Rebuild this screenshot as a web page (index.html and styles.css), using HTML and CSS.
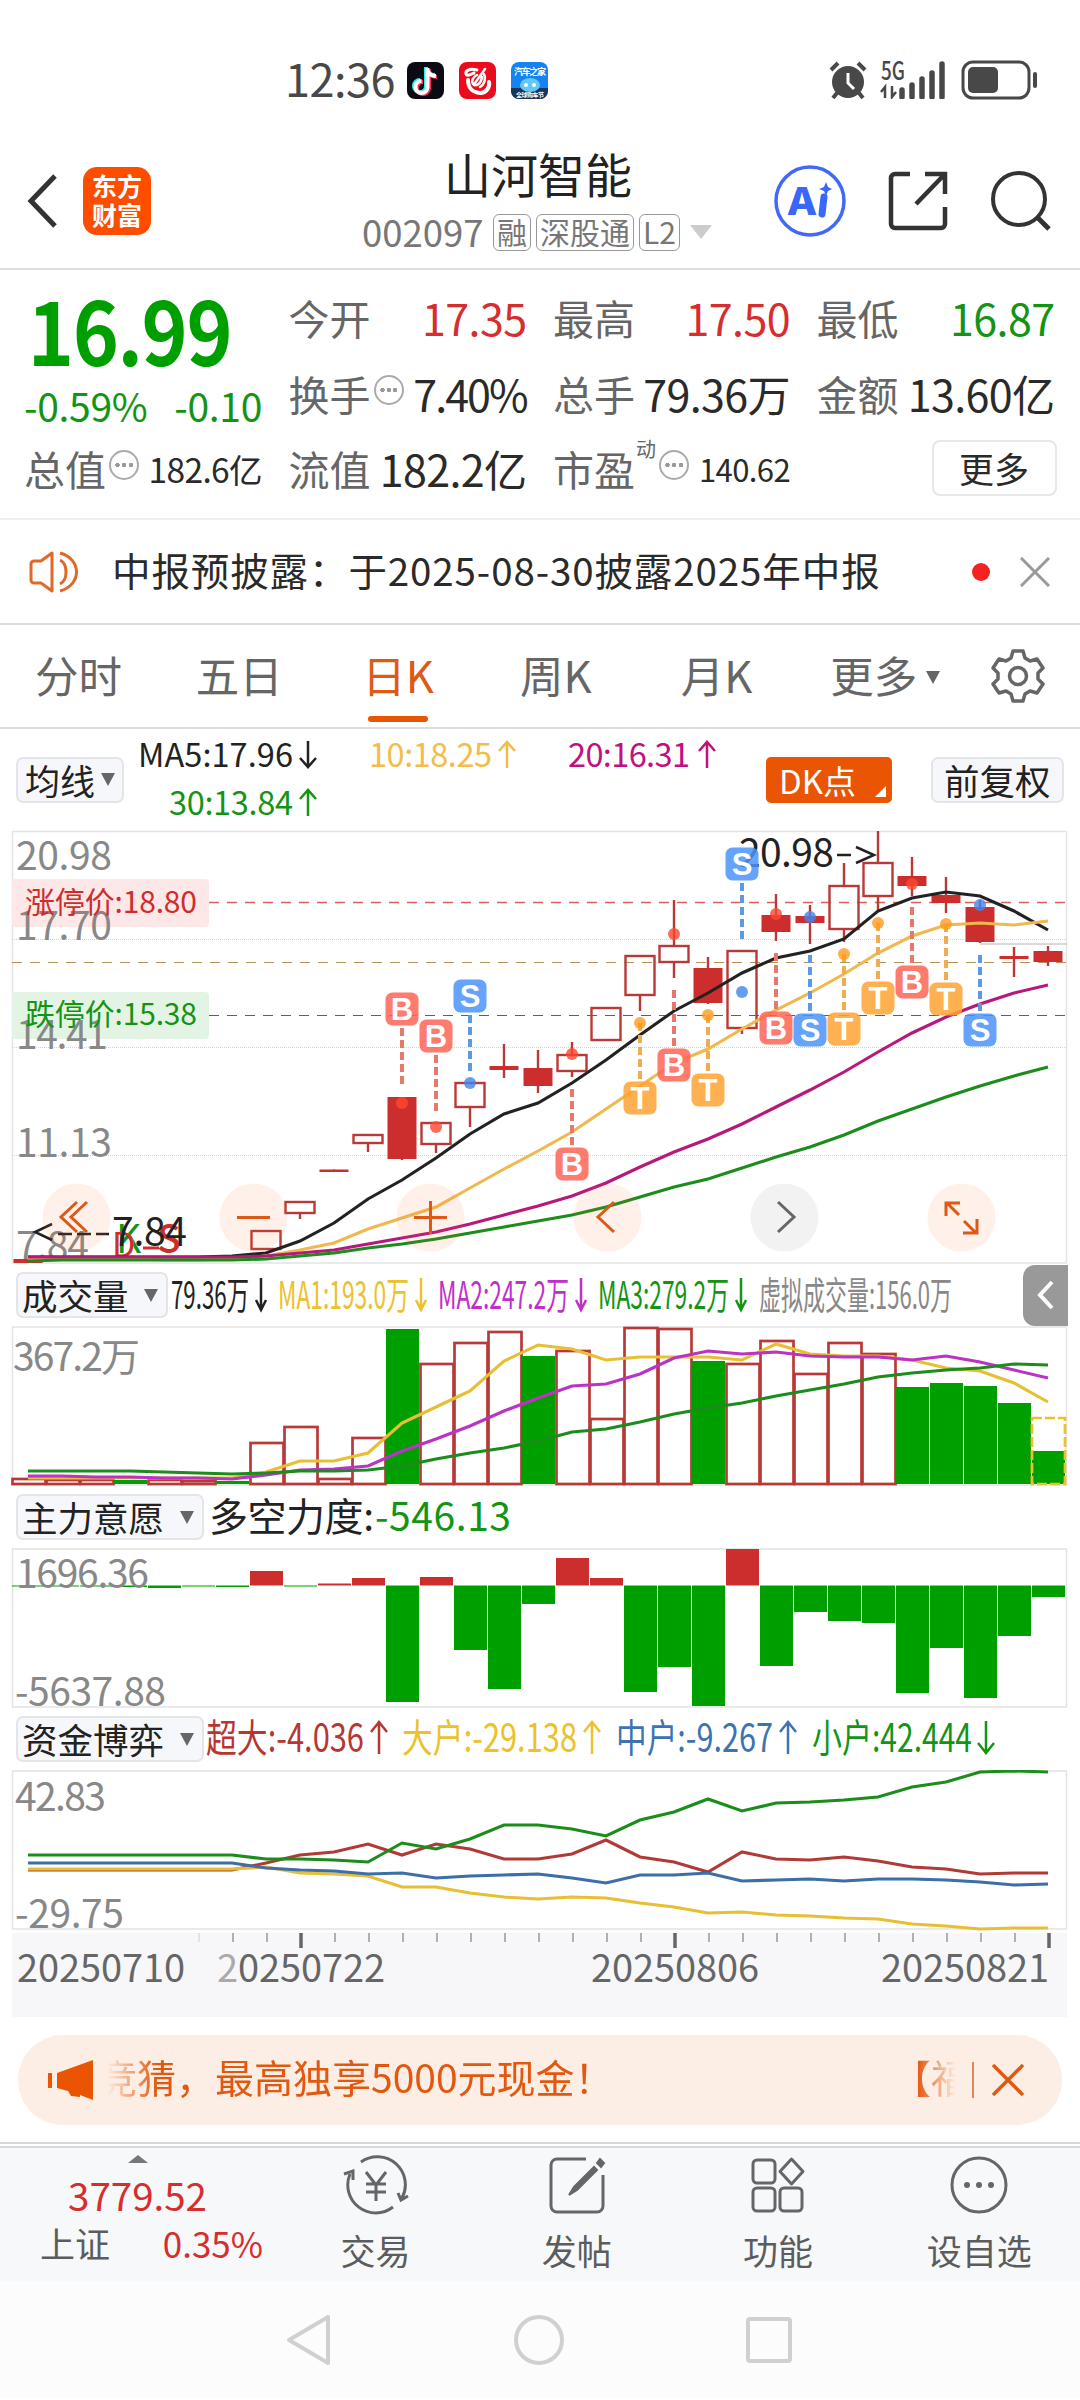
FILE: index.html
```html
<!DOCTYPE html>
<html lang="zh-CN">
<head>
    <meta charset="UTF-8">
    <meta name="viewport" content="width=device-width, initial-scale=1.0">
    <title>山河智能 002097</title>
    <link rel="stylesheet" href="styles.css">
</head>
<body>
    <!-- Status bar -->
    <div class="status-bar">
        <span class="clock">12:36</span>
        <div class="app-icons">
            <svg width="37" height="37" viewBox="0 0 37 37">
                <rect width="37" height="37" rx="8" fill="#0b0b14"/>
                <g fill="none" stroke-width="4">
                    <path d="M19 5v19a6 6 0 1 1-6-6M19 7c1 4 4 6 9 6" stroke="#25f4ee"/>
                    <path d="M22 7v19a6 6 0 1 1-6-6M22 9c1 4 4 6 8 6" stroke="#fe2c55"/>
                    <path d="M20.500 6v19a6 6 0 1 1-6-6M20.500 8c1 4 4 6 8.500 6" stroke="#fff"/>
                </g>
            </svg>
            <svg width="37" height="37" viewBox="0 0 37 37">
                <rect width="37" height="37" rx="8" fill="#ec0b1d"/>
                <g fill="none" stroke="#fff" stroke-linecap="round">
                    <path d="M18 8C10 6 6 9 7 12s5 0 8-1" stroke-width="3"/>
                    <path d="M9 18c0 9 6 13 13 13 6-1 9-6 8-11" stroke-width="4"/>
                    <path d="M26 7L16 21M18 13c-4 2-6 6-4 9 3 3 8 0 9-7M21 25c5-3 6-9 4-13" stroke-width="2.500"/>
                </g>
            </svg>
            <svg width="37" height="37" viewBox="0 0 37 37">
                <rect width="37" height="37" rx="8" fill="#1683f5"/>
                <path d="M0 26h37v3a8 8 0 0 1-8 8H8a8 8 0 0 1-8-8z" fill="#16365a"/>
                <ellipse cx="19" cy="23" rx="10" ry="7" fill="#63c7f8"/>
                <circle cx="15" cy="23" r="2" fill="#fff"/><circle cx="23" cy="23" r="2" fill="#fff"/>
                <text x="3" y="13" class="tiny" textLength="32">汽车之家</text>
                <text x="5" y="35" class="tiny-s" textLength="28">全球购车节</text>
            </svg>
        </div>
        <div class="status-right">
            <svg width="38" height="38" viewBox="0 0 38 38">
                <circle cx="19" cy="21" r="16" fill="#484848"/>
                <path d="M19 12v10l6 6" stroke="#fff" stroke-width="3" fill="none"/>
                <path d="M2 9l7-7M36 9l-7-7M8 32l-4 5M30 32l4 5" stroke="#484848" stroke-width="4"/>
            </svg>
            <svg class="signal" width="68" height="38" viewBox="0 0 68 38">
                <text x="1" y="19" textLength="24" lengthAdjust="spacingAndGlyphs">5G</text>
                <path d="M5 37V26l-4 5M12 25v11l4-5" stroke="#484848" stroke-width="2.5" fill="none"/>
                <path d="M22 36V29M32 36V24M42 36V18M52 36V12M62 36V3" stroke="#484848" stroke-width="5.500" stroke-linecap="round"/>
            </svg>
            <svg width="78" height="40" viewBox="0 0 78 40">
                <rect x="2" y="2" width="66" height="36" rx="10" fill="none" stroke="#484848" stroke-width="3"/>
                <rect x="7" y="7" width="30" height="26" rx="5" fill="#484848"/>
                <path d="M74 14v12" stroke="#484848" stroke-width="4" stroke-linecap="round"/>
            </svg>
        </div>
    </div>

    <!-- Header -->
    <header class="header">
        <svg class="back" width="32" height="56" viewBox="0 0 32 56"><path d="M29 3L5 28l24 25" fill="none" stroke="#333" stroke-width="5"/></svg>
        <div class="logo">东方<br>财富</div>
        <div class="title">
            <h1>山河智能</h1>
            <div class="code-row">
                <span class="code">002097</span>
                <span class="tag">融</span>
                <span class="tag">深股通</span>
                <span class="tag">L2</span>
                <i class="caret"></i>
            </div>
        </div>
        <div class="header-actions">
            <svg width="72" height="72" viewBox="0 0 72 72">
                <circle cx="36" cy="36" r="34" fill="none" stroke="#4169f5" stroke-width="3.5"/>
                <text x="14" y="50" class="ai" textLength="28" lengthAdjust="spacingAndGlyphs">A</text>
                <path d="M50 32l-2 17" stroke="#3a66fa" stroke-width="7" stroke-linecap="round"/>
                <path d="M52 17l2 5 4 2-4 2-2 5-2-5-5-2 5-2z" fill="#3a66fa"/>
            </svg>
            <svg width="60" height="60" viewBox="0 0 60 60">
                <path d="M22 3H7a4 4 0 0 0-4 4v46a4 4 0 0 0 4 4h46a4 4 0 0 0 4-4V36M37 3h20v20M56 4L28 33" fill="none" stroke="#333" stroke-width="4.5"/>
            </svg>
            <svg width="62" height="62" viewBox="0 0 62 62">
                <circle cx="29" cy="29" r="26" fill="none" stroke="#333" stroke-width="4"/>
                <path d="M47 47l12 12" stroke="#333" stroke-width="5"/>
            </svg>
        </div>
    </header>

    <!-- Quote -->
    <section class="quote">
        <div class="price">16.99</div>
        <div class="cell"><label>今开</label><b class="up">17.35</b></div>
        <div class="cell"><label>最高</label><b class="up">17.50</b></div>
        <div class="cell"><label>最低</label><b class="down">16.87</b></div>

        <div class="change"><span>-0.59%</span><span>-0.10</span></div>
        <div class="cell"><label>换手</label><i class="dots"></i><b class="rate">7.40%</b></div>
        <div class="cell"><label>总手</label><b>79.36万</b></div>
        <div class="cell"><label>金额</label><b>13.60亿</b></div>

        <div class="cell first"><label>总值</label><i class="dots"></i><b class="small">182.6亿</b></div>
        <div class="cell"><label>流值</label><b>182.2亿</b></div>
        <div class="cell"><label>市盈</label><sup>动</sup><i class="dots"></i><b class="small pe">140.62</b></div>
        <div class="cell end"><button class="more-btn">更多</button></div>
    </section>

    <!-- Notice -->
    <section class="notice">
        <svg width="52" height="44" viewBox="0 0 52 44">
            <path d="M23 3L12 11H5a3 3 0 0 0-3 3v16a3 3 0 0 0 3 3h7l11 8z" fill="none" stroke="#e0682a" stroke-width="3" stroke-linejoin="round"/>
            <path d="M31 10c8 4 8 20 0 24M31 3c22 6 22 32 0 38" fill="none" stroke="#e0682a" stroke-width="3"/>
        </svg>
        <p>中报预披露：于2025-08-30披露2025年中报</p>
        <i class="red-dot"></i>
        <svg width="30" height="30" viewBox="0 0 30 30"><path d="M1 1l28 28M29 1L1 29" stroke="#999" stroke-width="3"/></svg>
    </section>

    <!-- Period tabs -->
    <nav class="tabs">
        <span>分时</span>
        <span>五日</span>
        <span class="active">日K</span>
        <span>周K</span>
        <span>月K</span>
        <span class="more">更多<i class="caret"></i></span>
        <svg width="54" height="54" viewBox="0 0 54 54">
            <path d="M22 2h10l2 7 5 3 7-2 6 9-5 5v6l5 5-6 9-7-2-5 3-2 7H22l-2-7-5-3-7 2-6-9 5-5v-6l-5-5 6-9 7 2 5-3z" fill="none" stroke="#666" stroke-width="3.5" stroke-linejoin="round"/>
            <circle cx="27" cy="27" r="8.5" fill="none" stroke="#666" stroke-width="3.5"/>
        </svg>
    </nav>

    <!-- Moving averages -->
    <section class="ma-row">
        <button class="chip">均线<i class="caret"></i></button>
        <svg class="legend" width="600" height="100" viewBox="130 730 600 100">
            <g class="ma">
                <text x="138" y="767" fill="#222" textLength="155">MA5:17.96</text>
                <text x="369" y="767" fill="#f3bd47" textLength="123">10:18.25</text>
                <text x="568" y="767" fill="#c0117f" textLength="122">20:16.31</text>
                <text x="169" y="815" fill="#149414" textLength="124">30:13.84</text>
            </g>
            <g fill="none" stroke-width="2.5">
                <path d="M308 741v26m-8-9l8 9 8-9" stroke="#222"/>
                <path d="M507 768v-26m-8 9l8-9 8 9" stroke="#f3bd47"/>
                <path d="M707 768v-26m-8 9l8-9 8 9" stroke="#c0117f"/>
                <path d="M308 816v-26m-8 9l8-9 8 9" stroke="#149414"/>
            </g>
        </svg>
        <button class="chip dk">DK点</button>
        <button class="chip adjust">前复权</button>
    </section>

    <!-- K line -->
    <svg class="chart" id="kline" width="1080" height="434" viewBox="0 830 1080 434">
        <path class="frame" d="M12.5 831.5h1054v431.5h-1054z"/>
        <path class="grid" d="M12 939.5h1055M12 1047.5h1055M12 1155.5h1055"/>
        <path d="M209 902.5h858" stroke="#d9605c" stroke-width="1.5" stroke-dasharray="10 8"/>
        <path d="M12 962.5h1055" stroke="#b79254" stroke-dasharray="10 8"/>
        <path d="M209 1015.5h858" stroke="#149414" stroke-dasharray="10 8"/>
        <path d="M980 944h87" stroke="#ccc" stroke-width="1.5"/>
        <text class="peak" x="739" y="867" textLength="95">20.98</text>
        <path d="M837 855h14M856 847l18 8-18 8" fill="none" stroke="#222" stroke-width="2.5"/>
        <rect x="12" y="879" width="197" height="48" rx="4" fill="#fee7e7"/>
        <rect x="12" y="992" width="197" height="47" rx="4" fill="#e4f4e4"/>
        <g class="axis">
            <text x="16" y="870" textLength="96">20.98</text>
            <text x="16" y="940" textLength="96">17.70</text>
            <text x="16" y="1049" textLength="92">14.41</text>
            <text x="16" y="1157" textLength="96">11.13</text>
            <text x="16" y="1260" textLength="73">7.84</text>
        </g>
        <text class="limit" x="25" y="913" fill="#cc2e2e" textLength="172">涨停价:18.80</text>
        <text class="limit" x="25" y="1025" fill="#149414" textLength="172">跌停价:15.38</text>
        <g class="dk-mark">
            <text x="116" y="1253" fill="#149414">K</text>
            <text x="112" y="1257" fill="#cc2e2e" class="d">D</text>
            <text x="157" y="1253" fill="#cc2e2e" class="s">S</text>
            <path d="M143 1248h16" stroke="#cc2e2e" stroke-width="3"/>
        </g>
        <text class="peak" x="112" y="1246" textLength="75">7.84</text>
        <path d="M52 1224l-17 8 17 8M58 1234h14M77 1234h14M96 1234h13" fill="none" stroke="#222" stroke-width="2.5"/>
        <g id="candles"></g>
        <g id="maLines"></g>
        <g id="signals"></g>
        <g class="controls">
            <g id="discs"></g>
            <g fill="none" stroke="#dc5a16" stroke-width="3">
                <path d="M77 1202l-16 15 16 15M87 1202l-16 15 16 15"/>
                <path d="M237 1217.500h33M414 1217.500h33M430.500 1201v33"/>
                <path d="M614 1202l-16 15 16 15"/>
                <path d="M778 1202l16 15-16 15" stroke="#666"/>
                <path d="M946 1216v-13h14M947 1203l12 12M977 1219v14h-14M976 1233l-12-12"/>
            </g>
        </g>
    </svg>

    <!-- Volume -->
    <div class="sub-head">
        <button class="chip">成交量<i class="caret"></i></button>
        <svg class="legend" width="790" height="62" viewBox="171 1264 790 62">
            <g class="vol">
                <text x="172" y="1309" fill="#222" textLength="78" lengthAdjust="spacingAndGlyphs">79.36万</text>
                <text x="279" y="1309" fill="#ebc12c" textLength="131" lengthAdjust="spacingAndGlyphs">MA1:193.0万</text>
                <text x="439" y="1309" fill="#c030c8" textLength="131" lengthAdjust="spacingAndGlyphs">MA2:247.2万</text>
                <text x="599" y="1309" fill="#149414" textLength="131" lengthAdjust="spacingAndGlyphs">MA3:279.2万</text>
                <text x="760" y="1309" fill="#888" textLength="193" lengthAdjust="spacingAndGlyphs">虚拟成交量:156.0万</text>
            </g>
            <g fill="none" stroke-width="2.500">
                <path d="M262 1278v32m-5-10l5 10 5-10" stroke="#222"/>
                <path d="M422 1278v32m-5-10l5 10 5-10" stroke="#ebc12c"/>
                <path d="M582 1278v32m-5-10l5 10 5-10" stroke="#c030c8"/>
                <path d="M742 1278v32m-5-10l5 10 5-10" stroke="#149414"/>
            </g>
        </svg>
        <span class="drawer"><svg width="18" height="30" viewBox="0 0 18 30"><path d="M15 2L3 15l12 13" fill="none" stroke="#fff" stroke-width="4"/></svg></span>
    </div>
    <svg class="chart" width="1080" height="160" viewBox="0 1326 1080 160">
        <path class="frame" d="M12.500 1327h1054v158h-1054z"/>
        <g class="axis"><text x="13" y="1371" textLength="127">367.2万</text></g>
        <g id="volBars"></g>
        <g id="volLines"></g>
    </svg>

    <!-- Main force -->
    <div class="sub-head">
        <button class="chip">主力意愿<i class="caret"></i></button>
        <svg class="legend" width="320" height="62" viewBox="206 1486 320 62">
            <g class="wide">
                <text x="209" y="1531" fill="#222" textLength="165">多空力度:</text>
                <text x="375" y="1531" fill="#149414" textLength="136">-546.13</text>
            </g>
        </svg>
    </div>
    <svg class="chart" width="1080" height="160" viewBox="0 1548 1080 160">
        <path class="frame" d="M12.500 1549h1054v158h-1054z"/>
        <g id="forceBars"></g>
        <g class="axis">
            <text x="16" y="1588" textLength="133">1696.36</text>
            <text x="15" y="1706" textLength="151">-5637.88</text>
        </g>
    </svg>

    <!-- Capital -->
    <div class="sub-head">
        <button class="chip">资金博弈<i class="caret"></i></button>
        <svg class="legend" width="800" height="62" viewBox="206 1708 800 62">
            <g class="wide">
                <text x="206" y="1752" fill="#b83632" textLength="158" lengthAdjust="spacingAndGlyphs">超大:-4.036</text>
                <text x="402" y="1752" fill="#ebc12c" textLength="175" lengthAdjust="spacingAndGlyphs">大户:-29.138</text>
                <text x="616" y="1752" fill="#3c73b0" textLength="157" lengthAdjust="spacingAndGlyphs">中户:-9.267</text>
                <text x="812" y="1752" fill="#149414" textLength="160" lengthAdjust="spacingAndGlyphs">小户:42.444</text>
            </g>
            <g fill="none" stroke-width="2.500">
                <path d="M379 1754v-32m-8 10l8-10 8 10" stroke="#b83632"/>
                <path d="M592 1754v-32m-8 10l8-10 8 10" stroke="#ebc12c"/>
                <path d="M788 1754v-32m-8 10l8-10 8 10" stroke="#3c73b0"/>
                <path d="M986 1721v32m-8-10l8 10 8-10" stroke="#149414"/>
            </g>
        </svg>
    </div>
    <svg class="chart" width="1080" height="163" viewBox="0 1770 1080 163">
        <path class="frame" d="M12.500 1771h1054v158h-1054z"/>
        <g class="axis">
            <text x="15" y="1811" textLength="91">42.83</text>
            <text x="15" y="1928" textLength="109">-29.75</text>
        </g>
        <g id="fundLines"></g>
    </svg>
    <svg class="chart" width="1080" height="84" viewBox="0 1933 1080 84">
        <rect x="12" y="1933" width="1055" height="84" fill="#f7f7fa"/>
        <g id="ticks"></g>
        <g class="dates">
            <text x="17" y="1982" textLength="168">20250710</text>
            <text x="217" y="1982" textLength="168"><tspan fill="#aaa">2</tspan>0250722</text>
            <text x="591" y="1982" textLength="168">20250806</text>
            <text x="881" y="1982" textLength="168">20250821</text>
        </g>
    </svg>

    <!-- Promo -->
    <div class="promo">
        <svg width="46" height="40" viewBox="0 0 46 40">
            <path d="M2 13v15" stroke="#ea5504" stroke-width="4"/>
            <path d="M9 13L45 0v40l-13-5v2l-9-1-3-5-11-3z" fill="#ea5504"/>
        </svg>
        <div class="marquee"><span>竞猜，最高独享5000元现金！</span><span>【福利】</span></div>
        <i class="divider"></i>
        <svg width="34" height="34" viewBox="0 0 34 34"><path d="M2 2l30 30M32 2L2 32" stroke="#e2580f" stroke-width="3.500"/></svg>
    </div>

    <!-- Bottom bar -->
    <footer class="bottom-bar">
        <div class="index">
            <i class="caret"></i>
            <strong>3779.52</strong>
            <div><span>上证</span><em>0.35%</em></div>
        </div>
        <div class="item">
            <svg width="66" height="60" viewBox="0 0 66 60">
                <g fill="none" stroke="#666" stroke-width="3">
                    <path d="M18 7A28 28 0 0 1 59 43M50 52A28 28 0 0 1 7 19M1 19l9-3v9M65 41l-7 4-3-7"/>
                    <path d="M23 17l10 13 10-13M33 29v17M23 29h20M23 37h20"/>
                </g>
            </svg>
            <span>交易</span>
        </div>
        <div class="item">
            <svg width="58" height="60" viewBox="0 0 58 60">
                <path d="M38 4H9a6 6 0 0 0-6 6v41a6 6 0 0 0 6 6h40a6 6 0 0 0 6-6V20" fill="none" stroke="#666" stroke-width="3"/>
                <path d="M46 12L26 32l-5 8 8-5 20-20zM49 8l3-4 4 4-3 4z" fill="#666" stroke="#666" stroke-width="2"/>
            </svg>
            <span>发帖</span>
        </div>
        <div class="item">
            <svg width="58" height="60" viewBox="0 0 58 60">
                <g fill="none" stroke="#666" stroke-width="3">
                    <rect x="4" y="5" width="22" height="23" rx="4"/>
                    <rect x="4" y="33" width="22" height="23" rx="4"/>
                    <rect x="31" y="33" width="22" height="23" rx="4"/>
                    <path d="M42.500 4L54 16.500 42.500 29 31 16.500z" stroke-linejoin="round"/>
                </g>
            </svg>
            <span>功能</span>
        </div>
        <div class="item">
            <svg width="60" height="60" viewBox="0 0 60 60">
                <circle cx="30" cy="30" r="27" fill="none" stroke="#666" stroke-width="3"/>
                <g fill="#666"><circle cx="18" cy="30" r="3"/><circle cx="30" cy="30" r="3"/><circle cx="42" cy="30" r="3"/></g>
            </svg>
            <span>设自选</span>
        </div>
    </footer>

    <div class="sys-nav">
        <svg width="46" height="54" viewBox="0 0 46 54"><path d="M43 4v46L4 27z" fill="none" stroke="#d0d0d0" stroke-width="4" stroke-linejoin="round"/></svg>
        <svg width="50" height="50" viewBox="0 0 50 50"><circle cx="25" cy="25" r="23" fill="none" stroke="#d0d0d0" stroke-width="4"/></svg>
        <svg width="46" height="46" viewBox="0 0 46 46"><rect x="2" y="2" width="42" height="42" rx="2" fill="none" stroke="#d0d0d0" stroke-width="4"/></svg>
    </div>

    <script src="chart.js"></script>
</body>
</html>
```
FILE: styles.css
```css
* {
    margin: 0;
    padding: 0;
    box-sizing: border-box;
}

:root {
    --red: #d62e2e;
    --green: #009f00;
    --orange: #ea5504;
    --gray: #666;
}

body {
    width: 1080px;
    height: 2400px;
    overflow: hidden;
    background: #fff;
    color: #2a2a2a;
    font-family: "Noto Sans CJK SC", sans-serif;
}

svg {
    display: block;
    flex: none;
}

i, em {
    font-style: normal;
}

button {
    font-family: inherit;
    color: inherit;
}

.caret {
    display: inline-block;
    border: 7px solid transparent;
    border-top: 13px solid var(--gray);
    border-bottom: 0;
}

/* status bar */
.status-bar {
    height: 134px;
    padding: 26px 41px 0 285px;
    display: flex;
    align-items: center;
    color: #484848;
}

.clock {
    width: 122px;
    font-size: 45px;
    line-height: 60px;
    margin-top: -5px;
    letter-spacing: -0.5px;
}

.app-icons {
    display: flex;
    gap: 15px;
}

.tiny, .tiny-s {
    font-size: 9px;
    font-weight: 700;
    fill: #fff;
}

.tiny-s {
    font-size: 6px;
}

.status-right {
    margin-left: auto;
    display: flex;
    align-items: center;
    gap: 13px;
}

.signal text {
    font-size: 25px;
    font-weight: 500;
    fill: #484848;
}

/* header */
.header {
    height: 136px;
    padding: 0 28px 0 26px;
    display: flex;
    align-items: center;
    border-bottom: 2px solid #ddd;
}

.logo {
    width: 68px;
    height: 68px;
    margin-left: 25px;
    padding-top: 4px;
    border-radius: 14px;
    background: #ff4d00;
    color: #fff;
    font-size: 25px;
    font-weight: 700;
    line-height: 29px;
    text-align: center;
}

.title {
    width: 380px;
    margin-left: 200px;
    padding-left: 11px;
}

.title h1 {
    font-size: 47px;
    font-weight: 400;
    line-height: 58px;
    margin-top: -5px;
    padding-left: 82px;
    color: #222;
}

.code-row {
    display: flex;
    align-items: center;
    height: 42px;
    margin-top: 9px;
    color: #777;
}

.code {
    font-size: 36.500px;
    width: 131px;
    line-height: 40px;
}

.tag {
    height: 37px;
    margin-right: 5px;
    padding: 0 3px;
    border: 1.500px solid #999;
    border-radius: 6px;
    font-size: 30px;
    line-height: 32px;
}

.code-row .caret {
    margin-left: 5px;
    border-width: 14px 11px 0;
    border-top-color: #ccc;
}

.header-actions {
    margin-left: auto;
    display: flex;
    align-items: center;
    gap: 42px;
}

.ai {
    font-size: 38px;
    font-weight: 900;
    fill: #3a66fa;
}

/* quote */
.quote {
    height: 250px;
    padding: 9px 25px 0 26px;
    display: grid;
    grid-template-columns: 236px 238px 237px 238px;
    grid-template-rows: 76px 76px 74px;
    column-gap: 26.500px;
    border-bottom: 2px solid #eee;
}

.price {
    color: var(--green);
    font-size: 87px;
    font-weight: 700;
    line-height: 98px;
    letter-spacing: -1.500px;
    padding-left: 2px;
    transform: scaleX(0.9);
    transform-origin: left;
}

.change {
    display: flex;
    justify-content: space-between;
    align-items: center;
    margin-left: -2px;
    padding-top: 24px;
    color: #149414;
    font-size: 39px;
    letter-spacing: -0.3px;
    white-space: nowrap;
}

.cell {
    display: flex;
    align-items: center;
    white-space: nowrap;
}

.cell.first {
    margin-left: -2px;
}

.cell label {
    font-size: 41px;
    color: var(--gray);
}

.cell b {
    margin-left: auto;
    font-size: 43px;
    font-weight: 400;
    letter-spacing: -0.6px;
}

.cell b.rate {
    letter-spacing: -2px;
}

.cell b.small {
    font-size: 33.500px;
}

.cell b.pe {
    font-size: 31px;
}

.cell sup {
    font-size: 20px;
    line-height: 20px;
    margin-top: -38px;
    margin-left: 1px;
    color: var(--gray);
}

.dots {
    width: 30px;
    height: 30px;
    margin: -6px 0 0 3px;
    border: 2.500px solid #aaa;
    border-radius: 50%;
    background:
        radial-gradient(circle, #999 2px, transparent 2.500px) -6.500px 0,
        radial-gradient(circle, #999 2px, transparent 2.500px) 0 0,
        radial-gradient(circle, #999 2px, transparent 2.500px) 6.500px 0;
    background-repeat: no-repeat;
}

.up { color: var(--red); }
.down { color: #149414; }

.cell.end {
    justify-content: flex-end;
}

.more-btn {
    width: 125px;
    height: 56px;
    margin-right: -2px;
    background: #fff;
    border: 2px solid #e6e8ea;
    border-radius: 8px;
    font-size: 35px;
    line-height: 46px;
}

/* notice */
.notice {
    height: 105px;
    padding: 0 30px 0 29px;
    display: flex;
    align-items: center;
    border-bottom: 2px solid #ddd;
}

.notice p {
    width: 859px;
    padding-left: 31px;
    margin-top: -5px;
    font-size: 38.500px;
    letter-spacing: 0.9px;
    white-space: nowrap;
}

.red-dot {
    width: 18px;
    height: 18px;
    margin: 0 auto 0 32px;
    border-radius: 50%;
    background: #f52222;
}

/* tabs */
.tabs {
    height: 104px;
    padding: 0 35px;
    display: flex;
    align-items: center;
    border-bottom: 2px solid #ddd;
    color: var(--gray);
    font-size: 43.500px;
}

.tabs span {
    position: relative;
    width: 161px;
    line-height: 100px;
    margin-top: -3px;
}

.tabs span:nth-child(2) {
    width: 167px;
}

.tabs .active {
    width: 158px;
    color: #dc5a16;
}

.tabs .active::after {
    content: "";
    position: absolute;
    left: 6px;
    bottom: 3px;
    width: 60px;
    height: 6px;
    border-radius: 3px;
    background: var(--orange);
}

.tabs span:nth-child(5) {
    width: 150px;
}

.tabs .caret {
    margin: 0 0 9px 9px;
}

/* chips */
.chip {
    height: 46px;
    padding: 0 6px 0 4px;
    display: flex;
    align-items: center;
    justify-content: space-between;
    border: 2px solid #e3e5e8;
    border-radius: 7px;
    background: #f6f7fa;
    font-size: 35.500px;
    line-height: 38px;
    white-space: nowrap;
    color: #222;
}

.ma-row {
    height: 101px;
    padding: 0 16px;
    display: flex;
    align-items: center;
}

.ma-row .chip {
    width: 108px;
    padding: 0 7px;
    font-size: 35px;
}

.ma-row .legend {
    margin-left: 6px;
}

.ma-row .dk {
    position: relative;
    width: 126px;
    margin-left: 36px;
    padding-left: 11px;
    border-color: var(--orange);
    border-radius: 5px;
    background: var(--orange);
    color: #fff;
    font-size: 33px;
    line-height: 34px;
}

.dk::after {
    content: "";
    position: absolute;
    right: 4px;
    bottom: 4px;
    border-left: 11px solid transparent;
    border-bottom: 11px solid #fff;
}

.ma-row .adjust {
    width: 133px;
    margin-left: auto;
    padding: 0 11px;
    font-size: 35.500px;
}

.ma text { font-size: 32.500px; }
.vol text { font-size: 38px; }
.wide text { font-size: 39px; }

.sub-head {
    height: 62px;
    padding-left: 16px;
    display: flex;
    align-items: center;
}

.sub-head .chip {
    width: 152px;
}

.sub-head .caret {
    margin-right: 2px;
}

.sub-head .chip:has(+ .legend .wide) {
    width: 188px;
}

.sub-head .legend {
    margin-left: 2px;
}

.drawer {
    width: 45px;
    height: 61px;
    margin-left: auto;
    margin-right: 12px;
    padding: 15px 0 0 14px;
    border-radius: 12px 0 0 12px;
    background: #999;
}

/* charts */
.frame {
    fill: none;
    stroke: #e4e4e4;
    stroke-width: 1.500;
}

.grid {
    stroke: #d4d4d4;
    stroke-dasharray: 1 1;
}

.axis text {
    font-size: 39px;
    fill: #888;
}

.limit { font-size: 30px; }

.peak {
    font-size: 39px;
    fill: #222;
}

.dk-mark text {
    font-size: 39px;
}

.dk-mark .d {
    font-size: 34px;
}

.dk-mark .s {
    font-weight: 500;
}

.dates text {
    font-size: 38px;
    fill: var(--gray);
}

.sig-letter {
    font-size: 31px;
    font-weight: 700;
    fill: #fff;
    text-anchor: middle;
    font-family: "Liberation Sans", Arial, sans-serif;
}

/* promo */
.promo {
    height: 90px;
    margin: 18px 18px 0;
    padding: 0 37px 0 30px;
    display: flex;
    align-items: center;
    border-radius: 45px;
    background: #fceee4;
    color: #e2580f;
    font-size: 39px;
}

.marquee {
    width: 850px;
    height: 60px;
    margin-left: 13px;
    display: flex;
    justify-content: space-between;
    overflow: hidden;
    line-height: 53px;
    white-space: nowrap;
    -webkit-mask-image: linear-gradient(90deg, transparent, #000 50px, #000 810px, transparent);
    mask-image: linear-gradient(90deg, transparent, #000 50px, #000 810px, transparent);
}

.marquee span:first-child {
    margin-left: -9px;
}

.marquee span:last-child {
    width: 64px;
}

.divider {
    width: 2px;
    height: 36px;
    margin: 0 17px 0 16px;
    background: #dc8a5e;
}

/* bottom bar */
.bottom-bar {
    height: 139px;
    margin-top: 17px;
    border-top: 2px solid #d8d8d8;
    display: flex;
    background: linear-gradient(#fff 2px, #d8d8d8 2px, #d8d8d8 4px, #f7f8fa 4px);
    color: #5c5c5c;
    font-size: 35px;
}

.index {
    width: 275px;
    padding-top: 11px;
    display: flex;
    flex-direction: column;
    align-items: center;
    color: var(--red);
}

.index .caret {
    border-width: 0 10px 8px;
    border-bottom: 8px solid #777;
}

.index strong {
    margin-top: 6px;
    font-size: 38.500px;
    font-weight: 400;
    line-height: 50px;
}

.index div {
    width: 223px;
    margin-left: 28px;
    display: flex;
    justify-content: space-between;
    line-height: 48px;
}

.index span {
    color: #5c5c5c;
}

.item {
    flex: 1;
    padding-top: 11px;
    display: flex;
    flex-direction: column;
    align-items: center;
}

.item span {
    margin-top: 10px;
    line-height: 50px;
}

.sys-nav {
    height: 117px;
    padding: 0 288px 0 285px;
    display: flex;
    align-items: center;
    justify-content: space-between;
    background: #fcfcfc;
}
```
FILE: chart.js
```js
const RED = '#cc2e2e', DARK_RED = '#b83a38', GREEN = '#009f00';
const cx = i => 28 + i * 34;

function draw(id, html) {
    document.getElementById(id).innerHTML = html;
}

function line(values, color, width) {
    const pts = values.map((y, i) => cx(i) + ',' + y).join(' ');
    return `<polyline points="${pts}" fill="none" stroke="${color}" stroke-width="${width || 3.1}"/>`;
}

// [column, body top, body bottom, high, low, filled]
const candles = [
    [0, 1259, 1263, 1259, 1263, 1],
    [7, 1231, 1249, 1231, 1249, 0], [8, 1202, 1213, 1202, 1219, 0], [9, 1169.5, 1172, 1170, 1172, 1],
    [10, 1135, 1143, 1135, 1152, 0], [11, 1097, 1159, 1097, 1160, 1], [12, 1123, 1144, 1123, 1153, 0],
    [13, 1083, 1107, 1083, 1127, 0], [14, 1066, 1070, 1044, 1078, 1], [15, 1068, 1086, 1050, 1093, 1],
    [16, 1055, 1071, 1042, 1077, 0], [17, 1008, 1040, 1008, 1040, 0], [18, 956, 995, 956, 1011, 0],
    [19, 946, 962, 900, 978, 0], [20, 968, 1003, 957, 1004, 1], [21, 951, 1028, 951, 1034, 0],
    [22, 915, 932, 894, 941, 1], [23, 916, 923, 905, 944, 1], [24, 886, 929, 863, 942, 0],
    [25, 863, 896, 831, 910, 0], [26, 876, 886, 857, 896, 1], [27, 895, 903, 877, 913, 1],
    [28, 907, 942, 900, 943, 1], [29, 956, 959, 947, 977, 1], [30, 951, 962, 946, 966, 1]
];

draw('candles', candles.map(([i, top, bottom, high, low, filled]) => {
    const x = cx(i);
    const wick = `<path d="M${x} ${high}V${top}M${x} ${bottom}V${low}" stroke="${DARK_RED}" stroke-width="2.4"/>`;
    const body = filled
        ? `<rect x="${x - 14.5}" y="${top}" width="29" height="${bottom - top}" fill="${RED}"/>`
        : `<rect x="${x - 14.5}" y="${top}" width="29" height="${bottom - top}" fill="none" stroke="${DARK_RED}" stroke-width="2.4"/>`;
    return wick + body;
}).join(''));

draw('maLines',
    line([1257, 1257, 1257, 1257, 1257, 1257, 1256, 1253, 1241, 1223, 1199, 1180, 1158, 1134, 1114, 1103, 1083, 1060, 1035, 1011, 993, 973, 958, 951, 939, 911, 898, 892, 896, 911, 930], '#222') +
    line([1259, 1259, 1259, 1259, 1260, 1260, 1259, 1256, 1250, 1243, 1229, 1218, 1207, 1188, 1169, 1151, 1132, 1109, 1086, 1063, 1049, 1029, 1010, 993, 974, 953, 936, 925, 923, 925, 921], '#f0b84e') +
    line([1257, 1257, 1257, 1257, 1257, 1257, 1257, 1256, 1253, 1250, 1244, 1238, 1232, 1224, 1215, 1206, 1196, 1183, 1167, 1152, 1139, 1124, 1107, 1090, 1072, 1052, 1033, 1017, 1004, 993, 985], '#b8177c') +
    line([1261, 1260, 1260, 1260, 1260, 1260, 1260, 1259, 1256, 1253, 1248, 1244, 1239, 1233, 1227, 1221, 1215, 1207, 1197, 1187, 1179, 1168, 1157, 1147, 1135, 1121, 1109, 1097, 1086, 1076, 1067], '#1c8c1c'));

// [column, letter, badge y, dot y, line start, line end]
const signals = [
    [11, 'B', 1009, 1103, 1028, 1084], [12, 'B', 1036, 1127, 1055, 1111], [13, 'S', 996, 1083, 1015, 1071],
    [16, 'B', 1164, 1054, 1089, 1145], [18, 'T', 1098, 1023, 1023, 1079], [19, 'B', 1065, 934, 990, 1047],
    [20, 'T', 1090, 1015, 1015, 1071], [21, 'S', 864, 992, 883, 939], [22, 'B', 1028, 914, 953, 1009],
    [23, 'S', 1030, 917, 955, 1011], [24, 'T', 1029, 954, 954, 1010], [25, 'T', 998, 923, 923, 979],
    [26, 'B', 982, 884, 907, 963], [27, 'T', 999, 924, 924, 980], [28, 'S', 1030, 905, 955, 1011]
];
const signalColor = {
    B: ['#ff6454', '#e6796c', '#ff4630'],
    S: ['#4a93fb', '#5b9ae6', '#3f86ee'],
    T: ['#ffa233', '#f0ac50', '#ff9a1f']
};

draw('signals', signals.map(([i, letter, y, dot, from, to]) => {
    const x = cx(i), [badge, dash, point] = signalColor[letter];
    return `<path d="M${x} ${from}V${to}" stroke="${dash}" stroke-width="4" stroke-dasharray="8 4"/>
        <circle cx="${x}" cy="${dot}" r="6" fill="${point}" fill-opacity=".8"/>
        <rect x="${x - 16.5}" y="${y - 16.5}" width="33" height="33" rx="7" fill="${badge}" fill-opacity=".85"/>
        <text class="sig-letter" x="${x}" y="${y + 11}">${letter}</text>`;
}).join(''));

draw('discs', [76.5, 253.5, 430.5, 607.5, 784.5, 961.5].map((x, i) =>
    `<circle cx="${x}" cy="1217.5" r="34" fill="${i === 4 ? '#000' : '#ff6b2b'}" fill-opacity="${i === 4 ? .05 : .1}"/>`
).join(''));

// volume, 1 = green
const volumes = [
    [1479, 0], [1480, 0], [1480, 0], [1480, 1], [1480, 0], [1481, 0], [1481, 1], [1443, 0], [1427, 0], [1479, 0],
    [1438, 0], [1329, 1], [1364, 0], [1343, 0], [1332, 0], [1356, 1], [1351, 0], [1419, 0], [1328, 0], [1329, 0],
    [1361, 1], [1364, 0], [1341, 0], [1374, 0], [1343, 0], [1354, 0], [1387, 1], [1383, 1], [1386, 1], [1403, 1], [1451, 1]
];

const volMa3 = line([1471, 1471, 1471, 1471, 1472, 1473, 1474, 1473, 1471, 1471, 1470, 1466, 1459, 1453, 1448, 1441, 1432, 1429, 1422, 1414, 1408, 1403, 1396, 1390, 1384, 1377, 1373, 1370, 1368, 1364, 1365], '#1c8c1c');

draw('volBars', volumes.map(([top, green], i) => {
    const x = cx(i) - 15.5;
    return green
        ? `<rect x="${x - 0.5}" y="${top}" width="33" height="${1484 - top}" fill="${GREEN}"/>`
        : `<rect x="${x}" y="${top}" width="33" height="${1484 - top}" fill="none" stroke="${DARK_RED}" stroke-width="2.7"/>`;
}).join('') + '<rect x="1032" y="1418" width="33" height="66" fill="none" stroke="#ebc12c" stroke-width="2.7" stroke-dasharray="10 3"/>');

draw('volLines',
    line([1478, 1478, 1478, 1478, 1478, 1478, 1478, 1472, 1461, 1461, 1453, 1423, 1407, 1391, 1361, 1345, 1349, 1360, 1357, 1357, 1357, 1360, 1344, 1354, 1356, 1356, 1360, 1368, 1371, 1383, 1402], '#e8bf32') +
    line([1476, 1476, 1477, 1477, 1478, 1478, 1479, 1475, 1470, 1469, 1466, 1451, 1439, 1426, 1411, 1398, 1386, 1384, 1374, 1358, 1351, 1354, 1352, 1356, 1357, 1357, 1360, 1356, 1362, 1370, 1378], '#bb33c4') +
    volMa3);

// main force, bar end measured against the zero line
const zero = 1585.5;
const force = [
    1586.5, 1586.5, 1586.5, 1587, 1588, 1586.5, 1587, 1571, 1586.5, 1583.5, 1578, 1702, 1577, 1650, 1689, 1604,
    1558, 1578, 1692, 1667, 1706, 1549, 1666, 1612, 1621, 1623, 1693, 1648, 1698, 1636, 1597
];

draw('forceBars', force.map((y, i) =>
    `<rect x="${cx(i) - 16}" y="${Math.min(y, zero)}" width="33" height="${Math.abs(y - zero)}" fill="${y > zero ? GREEN : RED}"/>`
).join(''));

draw('fundLines',
    line([1870, 1870, 1870, 1870, 1870, 1870, 1870, 1863, 1855, 1852, 1844, 1855, 1844, 1849, 1859, 1859, 1854, 1840, 1857, 1862, 1872, 1852, 1859, 1860, 1857, 1861, 1867, 1869, 1874, 1873, 1873], '#b03a36') +
    line([1869, 1869, 1869, 1869, 1869, 1869, 1869, 1867, 1873, 1874, 1876, 1887, 1887, 1893, 1897, 1899, 1897, 1898, 1903, 1907, 1913, 1912, 1915, 1916, 1918, 1919, 1924, 1926, 1929, 1928, 1928], '#e8bf32') +
    line([1863, 1863, 1863, 1863, 1863, 1863, 1863, 1868, 1870, 1871, 1874, 1873, 1878, 1876, 1875, 1874, 1878, 1883, 1875, 1875, 1873, 1881, 1880, 1879, 1881, 1879, 1879, 1880, 1882, 1885, 1884], '#3c6ea8') +
    line([1855, 1855, 1855, 1855, 1855, 1855, 1855, 1859, 1859, 1860, 1862, 1843, 1849, 1839, 1825, 1825, 1829, 1836, 1820, 1812, 1799, 1811, 1803, 1802, 1800, 1797, 1787, 1782, 1772, 1771, 1772], '#1c8c1c'));

let ticks = '';
for (let i = 5; i <= 30; i++) {
    const major = i === 8 || i === 19 || i === 30;
    ticks += `<path d="M${cx(i) + 1} 1933v${major ? 15 : 9}" stroke="${i === 5 ? '#ddd' : major ? '#666' : '#999'}" stroke-width="${major ? 3.5 : 1.5}"/>`;
}
draw('ticks', ticks);
```
